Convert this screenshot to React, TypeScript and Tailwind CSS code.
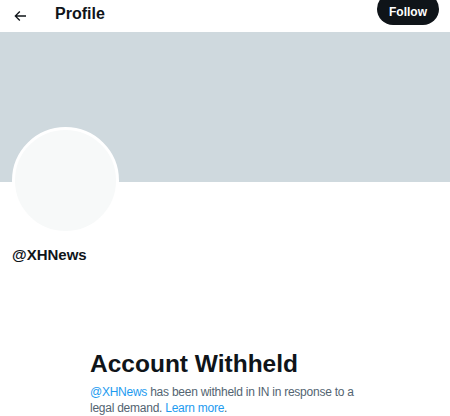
export default function App() {
  return (
    <div
      className="w-[450px] h-[416px] overflow-hidden bg-white text-[#0f1419]"
      style={{ fontFamily: '"Liberation Sans", Arial, sans-serif' }}
    >
      {/* header */}
      <div className="flex items-center justify-between h-[32px] pl-[12px] pr-[11px]">
        <div className="flex items-center">
          <svg viewBox="0 0 24 24" className="w-[16px] h-[16px] fill-[#0f1419]">
            <path d="M7.414 13l5.043 5.04-1.414 1.42L3.586 12l7.457-7.46 1.414 1.42L7.414 11H21v2H7.414z" />
          </svg>
          <h1 className="ml-[27px] text-[16px] font-bold leading-none -mt-[5px]">Profile</h1>
        </div>
        <button className="self-start -mt-[7px] h-[32px] px-[12px] rounded-full bg-[#0f1419] text-white text-[12px] font-bold flex items-center pt-[6px]">
          Follow
        </button>
      </div>

      {/* banner */}
      <div className="h-[150px] bg-[#cfd9de]" />

      {/* avatar + name */}
      <div className="px-[12px]">
        <div className="-mt-[55px] w-[107px] h-[107px] rounded-full border-[3px] border-white bg-[#f7f9f9]" />
        <div className="mt-[11px] text-[15px] font-bold leading-[20px]">@XHNews</div>
      </div>

      {/* withheld notice */}
      <div className="mt-[84px] pl-[90px] pr-[20px]">
        <h2 className="text-[24.5px] font-bold leading-[30px]">Account Withheld</h2>
        <p className="mt-[5px] text-[12px] tracking-[-0.25px] leading-[16px] text-[#536471]">
          <span className="text-[#1d9bf0]">@XHNews</span> has been withheld in IN in response to a
          <br />
          legal demand. <span className="text-[#1d9bf0]">Learn more</span>.
        </p>
      </div>
    </div>
  );
}
